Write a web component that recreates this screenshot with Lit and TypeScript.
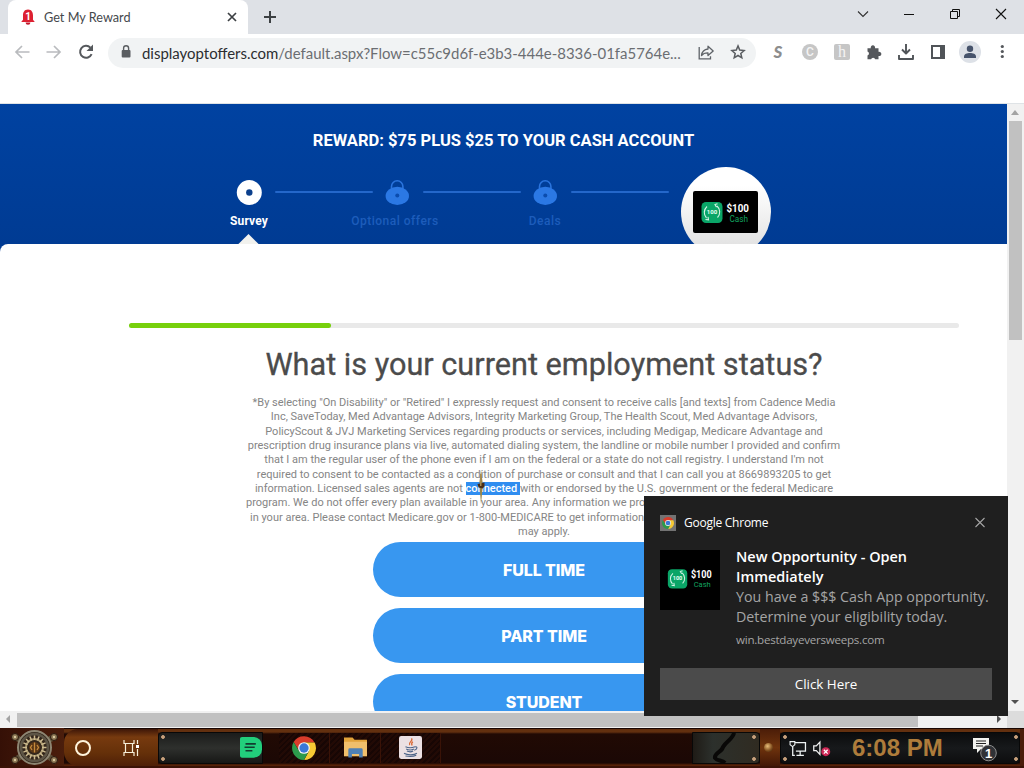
import { LitElement, css, html, svg } from 'lit';
import { customElement, property } from 'lit/decorators.js';

const icons: Record<string, unknown> = {
  back: svg`<path d="M15.5 8H2M8 2 2 8l6 6" fill="none" stroke="#b9bbbe" stroke-width="1.7"/>`,
  forward: svg`<path d="M.5 8H14M8 2l6 6-6 6" fill="none" stroke="#b9bbbe" stroke-width="1.7"/>`,
  reload: svg`<path d="M13.6 10.2A6 6 0 1 1 12.4 3.600" fill="none" stroke="#55585c" stroke-width="2"/><path d="M15 .5v6.500H8.500z" fill="#55585c"/>`,
  lock: svg`<rect x="3.7" y="6" width="8.8" height="7.500" rx="1" fill="#5a5d61"/><path d="M5.6 6.500V4.300a2.500 2.500 0 0 1 5 0v2.200" fill="none" stroke="#5a5d61" stroke-width="1.400"/>`,
  share: svg`<path d="M1.2 3v11.8h11.3v-2.5" fill="none" stroke="#5f6368" stroke-width="1.3"/><path d="M3.5 11.6C4 7.4 6.3 5.4 10 5V2.2l5.2 4.7-5.2 4.7V8.9c-3-.1-5 .8-6.5 2.7z" fill="none" stroke="#5f6368" stroke-width="1.3" stroke-linejoin="round"/>`,
  star: svg`<path d="m8 1.9 1.700 4.200 4.400.4-3.300 2.900 1 4.400L8 11.500l-3.800 2.300 1-4.400-3.300-2.900 4.400-.4z" fill="none" stroke="#5a5d61" stroke-width="1.5"/>`,
  puzzle: svg`<path d="M1.5 4.2h3.3a2.2 2.2 0 1 1 4.2 0h3.5v3.6a2.2 2.2 0 1 1 0 4.2v3.3H9.2a2.1 2.1 0 0 0-4.1 0H1.5v-3.8a2.1 2.1 0 0 0 0-4z" fill="#55585c"/>`,
  download: svg`<path d="M8 0v9M4 5.500l4 4 4-4M1 11v4h14v-4" fill="none" stroke="#505458" stroke-width="1.900" stroke-linejoin="round"/>`,
  panel: svg`<path d="M2 2h12v12H2z" fill="none" stroke="#505458" stroke-width="2"/><path d="M10 2h4v12h-4z" fill="#505458"/>`,
  dots: svg`<circle cx="8.3" cy="2.500" r="1.6" fill="#55585c"/><circle cx="8.3" cy="7.500" r="1.6" fill="#55585c"/><circle cx="8.3" cy="12.500" r="1.6" fill="#55585c"/>`,
  bell: svg`<path d="M8 .5c3.800 0 5 3 5 6v4.300l1.800 2.200H1.200L3 10.800V6.500c0-3 1.200-6 5-6z" fill="#dd2031"/><path d="M5.600 13.600h4.800a2.400 2.200 0 0 1-4.800 0z" fill="#c2182a"/><text x="8" y="10.500" text-anchor="middle" font-size="10" font-weight="700" font-family="Roboto" fill="#fff">1</text>`,
  tabclose: svg`<path d="m4 4 8 8M12 4l-8 8" stroke="#3c4043" stroke-width="1.700"/>`,
  plus: svg`<path d="M8 2v12M2 8h12" stroke="#3c4043" stroke-width="2"/>`,
  chevron: svg`<path d="m3 5.500 5 5 5-5" fill="none" stroke="#303030" stroke-width="1.100"/>`,
  minimize: svg`<path d="M3 8.500h10" stroke="#101010"/>`,
  restore: svg`<path d="M3.500 5.500h7v7h-7zM5.500 5.500v-2h7v7h-2" fill="none" stroke="#101010"/>`,
  close: svg`<path d="m3 3 10 10M13 3 3 13" stroke="#101010" stroke-width="1.100"/>`,
  toastclose: svg`<path d="m3.500 3 9 9M12.500 3l-9 9" stroke="#a5a5a5" stroke-width="1.100"/>`,
  chrome: svg`<path d="M1.100 4 4.800 10 8 8V4.300h7A8 8 0 0 0 1.100 4z" fill="#d93c2b"/><path d="M8 4.300h7.100a8 8 0 0 1-7 11.700L11.300 10z" fill="#f6c934"/><path d="M1.100 4A8 8 0 0 0 8 16l3.200-6H4.700z" fill="#2c9a4b"/><circle cx="8" cy="8" r="3.900" fill="#f4f4f4"/><circle cx="8" cy="8" r="3.100" fill="#3a78d8"/>`,
  taskview: svg`<path d="M1 0v3.500h10V0M1 16v-3.500h10V16M2.500 3.500v9M9.500 3.500v9M14.500 0v4M14.500 9v7" fill="none" stroke="#f7efd8" stroke-width="1.200"/><path d="M13 5h3v3h-3z" fill="#fff"/>`,
  folder: svg`<path d="M0 1h6l1.300 1.600H16V14H0z" fill="#e2a33a"/><path d="M0 4h16v10H0z" fill="#f0bf6c"/><path d="M3 15V9.500q0-1 1-1h8q1 0 1 1V15h-2.500v-2.500h-5V15z" fill="#4f80b4"/>`,
  java: svg`<rect width="16" height="16" rx="1.500" fill="#ebe0e3"/><path d="M8.700 1.700c1.500 2-2.600 2.400-1.300 4.600M9.700 4c-1.300.7-1 1.700-.6 2.600" fill="none" stroke="#d96835" stroke-width=".9"/><path d="M4.500 7.500c2 .8 4.500.8 6.500 0M5 9c1.500.8 4 .8 5.400 0M5.500 10.500c1.500.7 3 .7 4.300 0M3.500 12c2.500 1.500 7 1.300 9 0M11 7.600c2.300-.7 1.800 1.800-.4 2.300M4.500 13.900c3 .5 6 .2 7.500-.5" fill="none" stroke="#4d6488" stroke-width=".75"/>`,
  doc: svg`<path d="M0 1.500C0 .6.500 0 1.500 0H10a6 6 0 0 1 6 6v3a6 6 0 0 1-6 6H1.500C.5 15 0 14.400 0 13.500z" fill="#22cf7c"/><path d="M4 5h7.500M3.300 7.500h7.400M4 10h5" stroke="#123d30" stroke-width="1.100"/>`,
  network: svg`<path d="M4.500 2.500h11v8h-9M10.500 10.500v4M7 14.500h7M3.500 6v8.500h2" fill="none" stroke="#eef3f4" stroke-width="1.200"/><path d="M1 1.500h4.500v3L3.300 6.300 1 4.500z" fill="#151515" stroke="#eef3f4"/>`,
  sound: svg`<path d="M.7 5.500h2.400L6.500 2v11.500l-3.400-3.500H.7z" fill="none" stroke="#f0f0f0" stroke-width="1.200"/><circle cx="12" cy="11" r="4.200" fill="#cf2856"/><path d="m10.200 9.200 3.600 3.600m0-3.600-3.600 3.600" stroke="#fff" stroke-width="1.200"/>`,
};

@customElement('ui-icon')
export class UiIcon extends LitElement {
  @property() name = '';
  @property({ type: Number }) size = 16;

  override render() {
    return html`<svg width=${this.size} height=${this.size} viewBox="0 0 16 16">${icons[this.name]}</svg>`;
  }

  static override styles = css`
    :host {
      display: inline-flex;
      flex: none;
    }
    svg {
      display: block;
      overflow: visible;
    }
  `;
}

@customElement('cash-card')
export class CashCard extends LitElement {
  override render() {
    return html`<svg viewBox="0 0 65 42">
      <rect width="65" height="42" rx="2" fill="#000" />
      <rect x="8.500" y="11" width="21" height="21" rx="4.500" fill="#0aa567" />
      <path d="M14 15.500a8 8 0 0 0-.5 11.500M24 15a8 8 0 0 1 .5 11.500M12.500 28.500l3 .3-.5-3M24.500 12.800l-2.500.8 1.500 2.500" fill="none" stroke="#d5f5e6" stroke-width="1.100" />
      <text x="19" y="23.200" text-anchor="middle" class="mini">100</text>
      <text x="33.500" y="21" textLength="22.500" lengthAdjust="spacingAndGlyphs" class="amount">$100</text>
      <text x="36.500" y="30.500" textLength="18.500" lengthAdjust="spacingAndGlyphs" class="cash">Cash</text>
    </svg>`;
  }

  static override styles = css`
    :host {
      display: block;
      width: 65px;
    }
    svg {
      display: block;
      width: 100%;
      font-family: Roboto, sans-serif;
    }
    .mini {
      font-size: 6px;
      font-weight: 700;
      fill: #e5fff3;
    }
    .amount {
      font-size: 11px;
      font-weight: 700;
      fill: #fff;
    }
    .cash {
      font-size: 8.500px;
      fill: #12a35f;
    }
  `;
}

@customElement('browser-chrome')
export class BrowserChrome extends LitElement {
  override render() {
    return html`
      <div class="strip">
        <div class="tab">
          <ui-icon name="bell"></ui-icon>
          <span class="title">Get My Reward</span>
          <ui-icon name="tabclose"></ui-icon>
        </div>
        <div class="new"><ui-icon name="plus"></ui-icon></div>
        <div class="controls">
          ${['chevron', 'minimize', 'restore', 'close'].map((n) => html`<span><ui-icon name=${n}></ui-icon></span>`)}
        </div>
      </div>
      <div class="toolbar">
        ${['back', 'forward', 'reload'].map((n) => html`<span class="cell"><ui-icon name=${n}></ui-icon></span>`)}
        <div class="omnibox">
          <ui-icon name="lock"></ui-icon>
          <span class="url"><b>displayoptoffers.com</b>/default.aspx?Flow=c55c9d6f-e3b3-444e-8336-01fa5764e...</span>
          <span class="cell"><ui-icon name="share"></ui-icon></span>
          <span class="cell"><ui-icon name="star"></ui-icon></span>
        </div>
        <span class="cell ext-s">S</span>
        <span class="cell"><i class="ext-c">C</i></span>
        <span class="cell"><i class="ext-h">h</i></span>
        ${['puzzle', 'download', 'panel'].map((n) => html`<span class="cell"><ui-icon name=${n}></ui-icon></span>`)}
        <span class="cell">
          <svg width="22" height="22" viewBox="0 0 22 22">
            <circle cx="11" cy="11" r="11" fill="#dde1e7" />
            <circle cx="11" cy="7.800" r="3.200" fill="#46536b" />
            <path d="M5 17v-1.500c0-2.500 3-3.500 6-3.500s6 1 6 3.500V17z" fill="#46536b" />
          </svg>
        </span>
        <span class="cell"><ui-icon name="dots"></ui-icon></span>
      </div>
    `;
  }

  static override styles = css`
    :host {
      display: block;
      height: 103px;
      background: #fff;
      border-bottom: 1px solid #dfe3e6;
      font-family: Lato, sans-serif;
    }
    .strip {
      display: flex;
      height: 34px;
      padding-left: 8px;
      background: #dee1e6;
    }
    .tab {
      display: flex;
      align-items: center;
      box-sizing: border-box;
      width: 240px;
      padding: 0 8px 0 12px;
      border-radius: 8px 8px 0 0;
      background: #fff;
    }
    .title {
      flex: 1;
      padding-left: 8px;
      color: #45484c;
      font-size: 12.700px;
      line-height: 16px;
    }
    .new {
      padding: 9px 14px;
    }
    .controls {
      display: flex;
      margin-left: auto;
    }
    .controls span {
      display: flex;
      justify-content: center;
      width: 46px;
      padding-top: 6px;
    }
    .toolbar {
      display: flex;
      align-items: center;
      height: 37px;
      padding: 0 6px;
    }
    .toolbar > .cell {
      height: 35px;
      margin-bottom: 2px;
    }
    .cell {
      display: flex;
      flex: none;
      align-items: center;
      justify-content: center;
      width: 32px;
    }
    .omnibox {
      display: flex;
      align-items: center;
      box-sizing: border-box;
      width: 648px;
      height: 30px;
      margin: 0 6px;
      padding: 0 2px 1px 10px;
      border-radius: 15px;
      background: #f1f3f4;
    }
    .url {
      flex: 1;
      padding: 1px 0 0 8px;
      color: #6b6e72;
      font-size: 14.960px;
      white-space: nowrap;
    }
    .url b {
      color: #2b2d30;
      font-weight: 400;
    }
    .ext-s {
      color: #8d8d8d;
      font: italic 900 17px Lato, sans-serif;
    }
    .ext-c,
    .ext-h {
      width: 16px;
      height: 16px;
      background: #c6c6c6;
      color: #f4f4f4;
      font: 500 12px/16px Roboto, sans-serif;
      text-align: center;
    }
    .ext-c {
      border-radius: 50%;
    }
    .ext-h {
      border-radius: 2px;
      font-family: 'Liberation Serif', serif;
      font-size: 16px;
    }
  `;
}

@customElement('offer-page')
export class OfferPage extends LitElement {
  private lockIcon() {
    return html`<svg width="26" height="25" viewBox="0 0 26 25">
      <path d="M7.500 9V6.500a5.700 5.700 0 0 1 11.400 0V9" fill="none" stroke="#2a74dd" stroke-width="1.600" />
      <ellipse cx="13.300" cy="15.900" rx="11.700" ry="9.100" fill="#2b78e4" />
      <circle cx="13.300" cy="15.500" r="2" fill="#0b4cae" />
    </svg>`;
  }

  private surveyIcon() {
    return html`<svg width="26" height="25" viewBox="0 0 26 25">
      <circle cx="13.300" cy="12.500" r="12.500" fill="#fff" />
      <circle cx="13.300" cy="12.500" r="3.200" fill="#0b3f8c" />
    </svg>`;
  }

  override render() {
    return html`
      <header>
        <h1>REWARD: $75 PLUS $25 TO YOUR CASH ACCOUNT</h1>
        <div class="steps">
          <div class="step active">${this.surveyIcon()}<span>Survey</span><i class="notch"></i></div>
          <hr />
          <div class="step offers">${this.lockIcon()}<span>Optional offers</span></div>
          <hr />
          <div class="step">${this.lockIcon()}<span>Deals</span></div>
          <hr />
          <div class="prize"><cash-card></cash-card></div>
        </div>
      </header>
      <main>
        <div class="progress"><div class="done"></div></div>
        <h2>What is your current employment status?</h2>
        <div class="terms">
          <p>*By selecting "On Disability" or "Retired" I expressly request and consent to receive calls [and texts] from Cadence Media</p>
          <p>Inc, SaveToday, Med Advantage Advisors, Integrity Marketing Group, The Health Scout, Med Advantage Advisors,</p>
          <p>PolicyScout &amp; JVJ Marketing Services regarding products or services, including Medigap, Medicare Advantage and</p>
          <p>prescription drug insurance plans via live, automated dialing system, the landline or mobile number I provided and confirm</p>
          <p>that I am the regular user of the phone even if I am on the federal or a state do not call registry. I understand I'm not</p>
          <p>required to consent to be contacted as a condition of purchase or consult and that I can call you at 8669893205 to get</p>
          <p>information. Licensed sales agents are not <mark>connected </mark>with or endorsed by the U.S. government or the federal Medicare</p>
          <p class="cut">program. We do not offer every plan available in your area. Any information we pro</p>
          <p class="cut second">in your area. Please contact Medicare.gov or 1-800-MEDICARE to get information</p>
          <p>may apply.</p>
        </div>
        <div class="answers">
          <button>FULL TIME</button>
          <button>PART TIME</button>
          <button>STUDENT</button>
        </div>
      </main>
      <svg class="cursor" width="10" height="34" viewBox="0 0 10 34">
        <path d="M5 0 3.300 13h3.400zM3.600 17 5 34l1.700-17z" fill="#9a8648" />
        <path d="M1.500 14 8.500 12.500v4l-2 2-4-1z" fill="#4a2d17" />
        <path d="M4 4h1.500v12H4z" fill="#a68b50" />
      </svg>
    `;
  }

  static override styles = css`
    :host {
      display: block;
      position: relative;
      overflow: hidden;
      background: #fff;
      font-family: Roboto, sans-serif;
    }
    header {
      box-sizing: border-box;
      height: 148px;
      padding-top: 27px;
      background: linear-gradient(#0042a1, #003b93 140px);
      overflow: hidden;
    }
    h1 {
      margin: 0;
      color: #fff;
      font-size: 16.550px;
      font-weight: 700;
      line-height: 20px;
      text-align: center;
    }
    .steps {
      display: flex;
      align-items: flex-start;
      padding: 16px 0 0 236px;
    }
    .step {
      display: flex;
      flex-direction: column;
      align-items: center;
      width: 26px;
      margin-top: 13px;
      color: #1d5cbb;
      font-size: 12px;
      font-weight: 500;
      letter-spacing: 0.500px;
      white-space: nowrap;
    }
    .step span {
      margin-top: 8px;
      line-height: 16px;
    }
    .offers span {
      margin-left: -4px;
    }
    .active {
      color: #fff;
      font-weight: 700;
      letter-spacing: 0.150px;
    }
    .notch {
      width: 15px;
      height: 15px;
      margin: 8px 2px 0 0;
      background: #f2f2ee;
      transform: rotate(45deg);
    }
    hr {
      width: 98px;
      height: 2px;
      margin: 24px 11px 0 13px;
      border: 0;
      border-radius: 1px;
      background: #2467ca;
    }
    .prize {
      display: flex;
      justify-content: center;
      box-sizing: border-box;
      width: 90px;
      height: 90px;
      margin-left: 1px;
      padding: 24px 2px 0 0;
      border-radius: 50%;
      background: linear-gradient(#fff 20%, #f3f3f3 50%, #ddd);
    }
    main {
      position: relative;
      height: 600px;
      margin-top: -8px;
      padding-top: 79px;
      box-sizing: border-box;
      border-radius: 8px 0 0;
      background: #fff;
    }
    .progress {
      width: 830px;
      height: 5px;
      margin-left: 129px;
      border-radius: 3px;
      background: #e9e9e9;
    }
    .done {
      width: 202px;
      height: 5px;
      border-radius: 3px;
      background: #77d00c;
    }
    h2 {
      margin: 19px 0 0 129px;
      width: 830px;
      color: #4b4b4b;
      font-size: 30.670px;
      font-weight: 400;
      line-height: 36px;
      text-align: center;
      -webkit-text-stroke: 0.300px #4b4b4b;
    }
    .terms {
      width: 830px;
      margin: 13px 0 0 129px;
      color: #858585;
      font-size: 11px;
      text-align: center;
      white-space: nowrap;
    }
    p {
      height: 14.330px;
      margin: 0;
      line-height: 14.330px;
    }
    .cut {
      padding-left: 117px;
      text-align: left;
    }
    .second {
      padding-left: 121px;
    }
    mark {
      display: inline-block;
      height: 13px;
      background: #2f8df0;
      color: #fff;
      font-weight: 500;
      line-height: 13px;
      white-space: pre;
    }
    .answers {
      display: flex;
      flex-direction: column;
      gap: 11px;
      width: 342px;
      margin: 3px 0 0 373px;
    }
    button {
      height: 55px;
      padding: 0;
      border: 0;
      border-radius: 28px;
      background: #3897f0;
      color: #fff;
      font: 800 16px Inter, sans-serif;
      letter-spacing: -0.100px;
    }
    .cursor {
      position: absolute;
      left: 476px;
      top: 366px;
    }
  `;
}

@customElement('toast-card')
export class ToastCard extends LitElement {
  override render() {
    return html`
      <div class="top">
        <i class="badge"><ui-icon name="chrome" size="12"></ui-icon></i>
        <span class="app">Google Chrome</span>
        <ui-icon name="toastclose"></ui-icon>
      </div>
      <div class="content">
        <div class="thumb"><cash-card></cash-card></div>
        <div>
          <div class="heading">New Opportunity - Open</div>
          <div class="heading">Immediately</div>
          <div class="text">You have a $$$ Cash App opportunity.</div>
          <div class="text">Determine your eligibility today.</div>
          <div class="site">win.bestdayeversweeps.com</div>
        </div>
      </div>
      <div class="action">Click Here</div>
    `;
  }

  static override styles = css`
    :host {
      display: block;
      box-sizing: border-box;
      width: 364px;
      height: 220px;
      padding: 16px;
      background: #1f1f1f;
      color: #fff;
      font-family: 'Open Sans', sans-serif;
      white-space: nowrap;
    }
    .top {
      display: flex;
      align-items: center;
      height: 21px;
      padding-right: 4px;
    }
    .badge {
      display: flex;
      align-items: center;
      justify-content: center;
      width: 16px;
      height: 16px;
      background: #737373;
    }
    .app {
      flex: 1;
      padding-left: 8px;
      font-size: 12px;
      letter-spacing: -0.250px;
    }
    .content {
      display: flex;
      gap: 16px;
      height: 119px;
      padding-top: 14px;
      line-height: 20px;
    }
    .thumb {
      display: flex;
      flex: none;
      align-items: center;
      justify-content: center;
      box-sizing: border-box;
      width: 60px;
      height: 60px;
      margin-top: 3px;
      padding-bottom: 3px;
      background: #000;
    }
    .thumb cash-card {
      width: 60px;
    }
    .heading {
      font-size: 14.450px;
      font-weight: 600;
    }
    .text {
      color: #a5a5a5;
      font-size: 14.240px;
    }
    .site {
      margin-top: 3px;
      color: #a5a5a5;
      font-size: 11.600px;
      letter-spacing: -0.250px;
    }
    .action {
      height: 32px;
      margin-top: 2px;
      background: #4b4b4b;
      font-size: 13.400px;
      line-height: 32px;
      text-align: center;
    }
  `;
}

@customElement('task-bar')
export class TaskBar extends LitElement {
  private startOrb() {
    const teeth = Array.from({ length: 16 }, (_, i) => i * 22.5);
    return html`<svg width="64" height="40" viewBox="0 0 64 40">
      ${[[15, 9], [54, 9], [15, 32], [54, 32]].map(
        ([x, y]) => svg`<path d="M34 20 ${x} ${y}" stroke="#5d5039" stroke-width="6"/><circle cx=${x} cy=${y} r="3.500" fill="#8b7653" stroke="#28170e"/><circle cx=${x} cy=${y} r="1.200" fill="#d8c9a0"/>`,
      )}
      <circle cx="34.500" cy="19.500" r="16.500" fill="#34281c" stroke="#8d8572" stroke-width="2" />
      <circle cx="34.500" cy="19.500" r="13.500" fill="#33261b" stroke="#5d5546" stroke-width="2.500" />
      <circle cx="34.500" cy="19.500" r="8.500" fill="none" stroke="#a8966c" stroke-width="2" />
      ${teeth.map((a) => svg`<path d="M34.500 7.500v4.500" stroke="#cdbb91" stroke-width="1.500" transform="rotate(${a} 34.500 19.500)"/>`)}
      <circle cx="34.500" cy="19.500" r="5.500" fill="#593616" />
      <path d="M34.500 14.500v10M32 17l-1.500 2.500L32 22M37 17l1.500 2.500L37 22" stroke="#c58a3c" stroke-width="1.300" fill="none" />
    </svg>`;
  }

  override render() {
    return html`
      <div class="start">${this.startOrb()}</div>
      <div class="copper">
        <i class="ring"></i>
        <ui-icon name="taskview"></ui-icon>
      </div>
      <div class="plate search"><ui-icon name="doc" size="22"></ui-icon></div>
      <div class="apps">
        <span><ui-icon name="chrome" size="24"></ui-icon></span>
        <span><ui-icon name="folder" size="23"></ui-icon></span>
        <span class="java"><ui-icon name="java" size="23"></ui-icon></span>
      </div>
      <div class="plate pipe">
        <svg width="66" height="30" viewBox="0 0 66 30">
          <path d="M41 0c-1 6-8 8-11 14-1 5-9 6-8 11 2 3 7 2 10 5" fill="none" stroke="#090807" stroke-width="4" />
        </svg>
      </div>
      <div class="knob"><i></i></div>
      <div class="plate tray">
        <ui-icon name="network" size="17"></ui-icon>
        <ui-icon name="sound" size="17"></ui-icon>
        <span class="clock">6:08 PM</span>
        <svg width="36" height="28" viewBox="0 0 36 28">
          <path d="M1 4h16v11h-8l-4 4v-4H1z" fill="#f4f4f0" />
          <path d="M4 7h10M4 9.500h10M4 12h7" stroke="#222" />
          <circle cx="16.500" cy="19" r="7.800" fill="#303236" stroke="#8c8c8c" />
          <text x="16.500" y="23.500" text-anchor="middle" class="count">1</text>
        </svg>
      </div>
      <i class="rim"></i>
    `;
  }

  static override styles = css`
    :host {
      display: flex;
      box-sizing: border-box;
      height: 40px;
      border-top: 1px solid #180602;
      border-bottom: 2px solid #3a1206;
      background: linear-gradient(#63300f 0 3px, #210a04 5px, #1b0805 34px, #572208 36px);
      font-family: 'Liberation Sans', sans-serif;
    }
    :host > * {
      flex: none;
      box-sizing: border-box;
    }
    .start {
      width: 64px;
      margin-top: -1px;
      background: linear-gradient(90deg, #351006, #4b1e0c);
    }
    .start svg {
      display: block;
    }
    .copper {
      display: flex;
      align-items: center;
      width: 94px;
      padding-left: 11px;
      gap: 32px;
      border-radius: 14px 0 0 14px;
      background: linear-gradient(#3d1608, #773a0f 22%, #653009 65%, #4e1f07);
    }
    .ring {
      box-sizing: border-box;
      width: 16px;
      height: 16px;
      border: 2.500px solid #fff4dc;
      border-radius: 50%;
    }
    .plate {
      height: 32px;
      margin-top: 3px;
      border: 1px solid #080808;
      border-radius: 4px;
      background:
        radial-gradient(circle at 4px 4px, #c7a07b 0 1.500px, transparent 2.200px),
        radial-gradient(circle at 4px 26px, #c7a07b 0 1.500px, transparent 2.200px),
        linear-gradient(#1b1c1b, #2e302d 50%, #171716);
    }
    .search {
      display: flex;
      align-items: center;
      width: 105px;
      padding-left: 81px;
      border-radius: 4px 0 0 4px;
    }
    .apps {
      display: flex;
      align-items: center;
      width: 429px;
      padding-left: 16px;
    }
    .apps span {
      display: flex;
      justify-content: center;
      box-sizing: border-box;
      width: 51px;
      height: 30px;
      align-items: center;
      background: repeating-linear-gradient(135deg, #220a05 0 2px, #170604 2px 4px);
      border-right: 1px solid #3a1307;
    }
    .apps .java {
      width: 60px;
    }
    .pipe {
      width: 68px;
      border-radius: 0 4px 4px 0;
      background:
        radial-gradient(circle at 61px 4px, #c7a07b 0 1.500px, transparent 2.200px),
        radial-gradient(circle at 61px 26px, #c7a07b 0 1.500px, transparent 2.200px),
        linear-gradient(90deg, #1f1b16, #2c302c 30%, #302b21);
    }
    .pipe svg {
      display: block;
    }
    .knob {
      display: flex;
      align-items: center;
      justify-content: center;
      width: 20px;
      padding-right: 3px;
      background: linear-gradient(#4b1d08, #6f330d, #421706);
    }
    .knob i {
      width: 9px;
      height: 9px;
      border-radius: 50%;
      background: radial-gradient(circle at 40% 35%, #e9bd7a, #845221 55%, #311505);
    }
    .tray {
      display: flex;
      align-items: center;
      width: 240px;
      padding-left: 8px;
      background:
        radial-gradient(circle at 4px 4px, #c7a07b 0 1.500px, transparent 2.200px),
        radial-gradient(circle at 4px 26px, #c7a07b 0 1.500px, transparent 2.200px),
        radial-gradient(circle at 235px 4px, #c7a07b 0 1.500px, transparent 2.200px),
        radial-gradient(circle at 235px 26px, #c7a07b 0 1.500px, transparent 2.200px),
        linear-gradient(#0b0c0d, #17191b 50%, #0d0d0e);
    }
    .tray ui-icon + ui-icon {
      margin-left: 7px;
    }
    .clock {
      width: 90px;
      margin: 0 30px 0 22px;
      color: #ae7c3b;
      font-size: 24px;
      font-weight: 700;
      white-space: nowrap;
    }
    .count {
      font-size: 13px;
      font-weight: 700;
      fill: #fff;
    }
    .rim {
      width: 4px;
      background: #4a1c09;
    }
  `;
}

@customElement('app-root')
export class AppRoot extends LitElement {
  override render() {
    return html`
      <browser-chrome></browser-chrome>
      <div class="view">
        <offer-page></offer-page>
        <div class="vbar"><i class="arrow up"></i><div class="vthumb"></div><i class="arrow down"></i></div>
        <div class="hbar"><i class="arrow left"></i><div class="hthumb"></div><i class="arrow right"></i></div>
        <div class="corner"></div>
      </div>
      <task-bar></task-bar>
      <toast-card class="toast"></toast-card>
    `;
  }

  static override styles = css`
    :host {
      display: block;
      position: relative;
      width: 1024px;
      height: 768px;
      overflow: hidden;
      background: #fff;
    }
    .view {
      display: grid;
      grid-template: 607px 17px / 1007px 17px;
    }
    .vbar,
    .hbar {
      display: flex;
      align-items: center;
      background: #f1f1f1;
    }
    .vbar {
      flex-direction: column;
    }
    .vthumb {
      width: 13px;
      height: 219px;
      margin-bottom: auto;
      background: #c1c1c1;
    }
    .hthumb {
      width: 901px;
      height: 14px;
      margin-right: auto;
      background: #c1c1c1;
    }
    .corner {
      background: #dcdcdc;
    }
    .arrow {
      width: 17px;
      height: 17px;
      background: #505050;
    }
    .up {
      background: #a3a3a3;
      clip-path: polygon(4px 11px, 12px 11px, 8px 6px);
    }
    .down {
      clip-path: polygon(4px 6px, 12px 6px, 8px 10px);
    }
    .left {
      background: #a3a3a3;
      clip-path: polygon(10px 4px, 10px 12px, 6px 8px);
    }
    .right {
      clip-path: polygon(7px 4px, 7px 12px, 11px 8px);
    }
    .toast {
      position: absolute;
      left: 644px;
      top: 496px;
    }
  `;
}
